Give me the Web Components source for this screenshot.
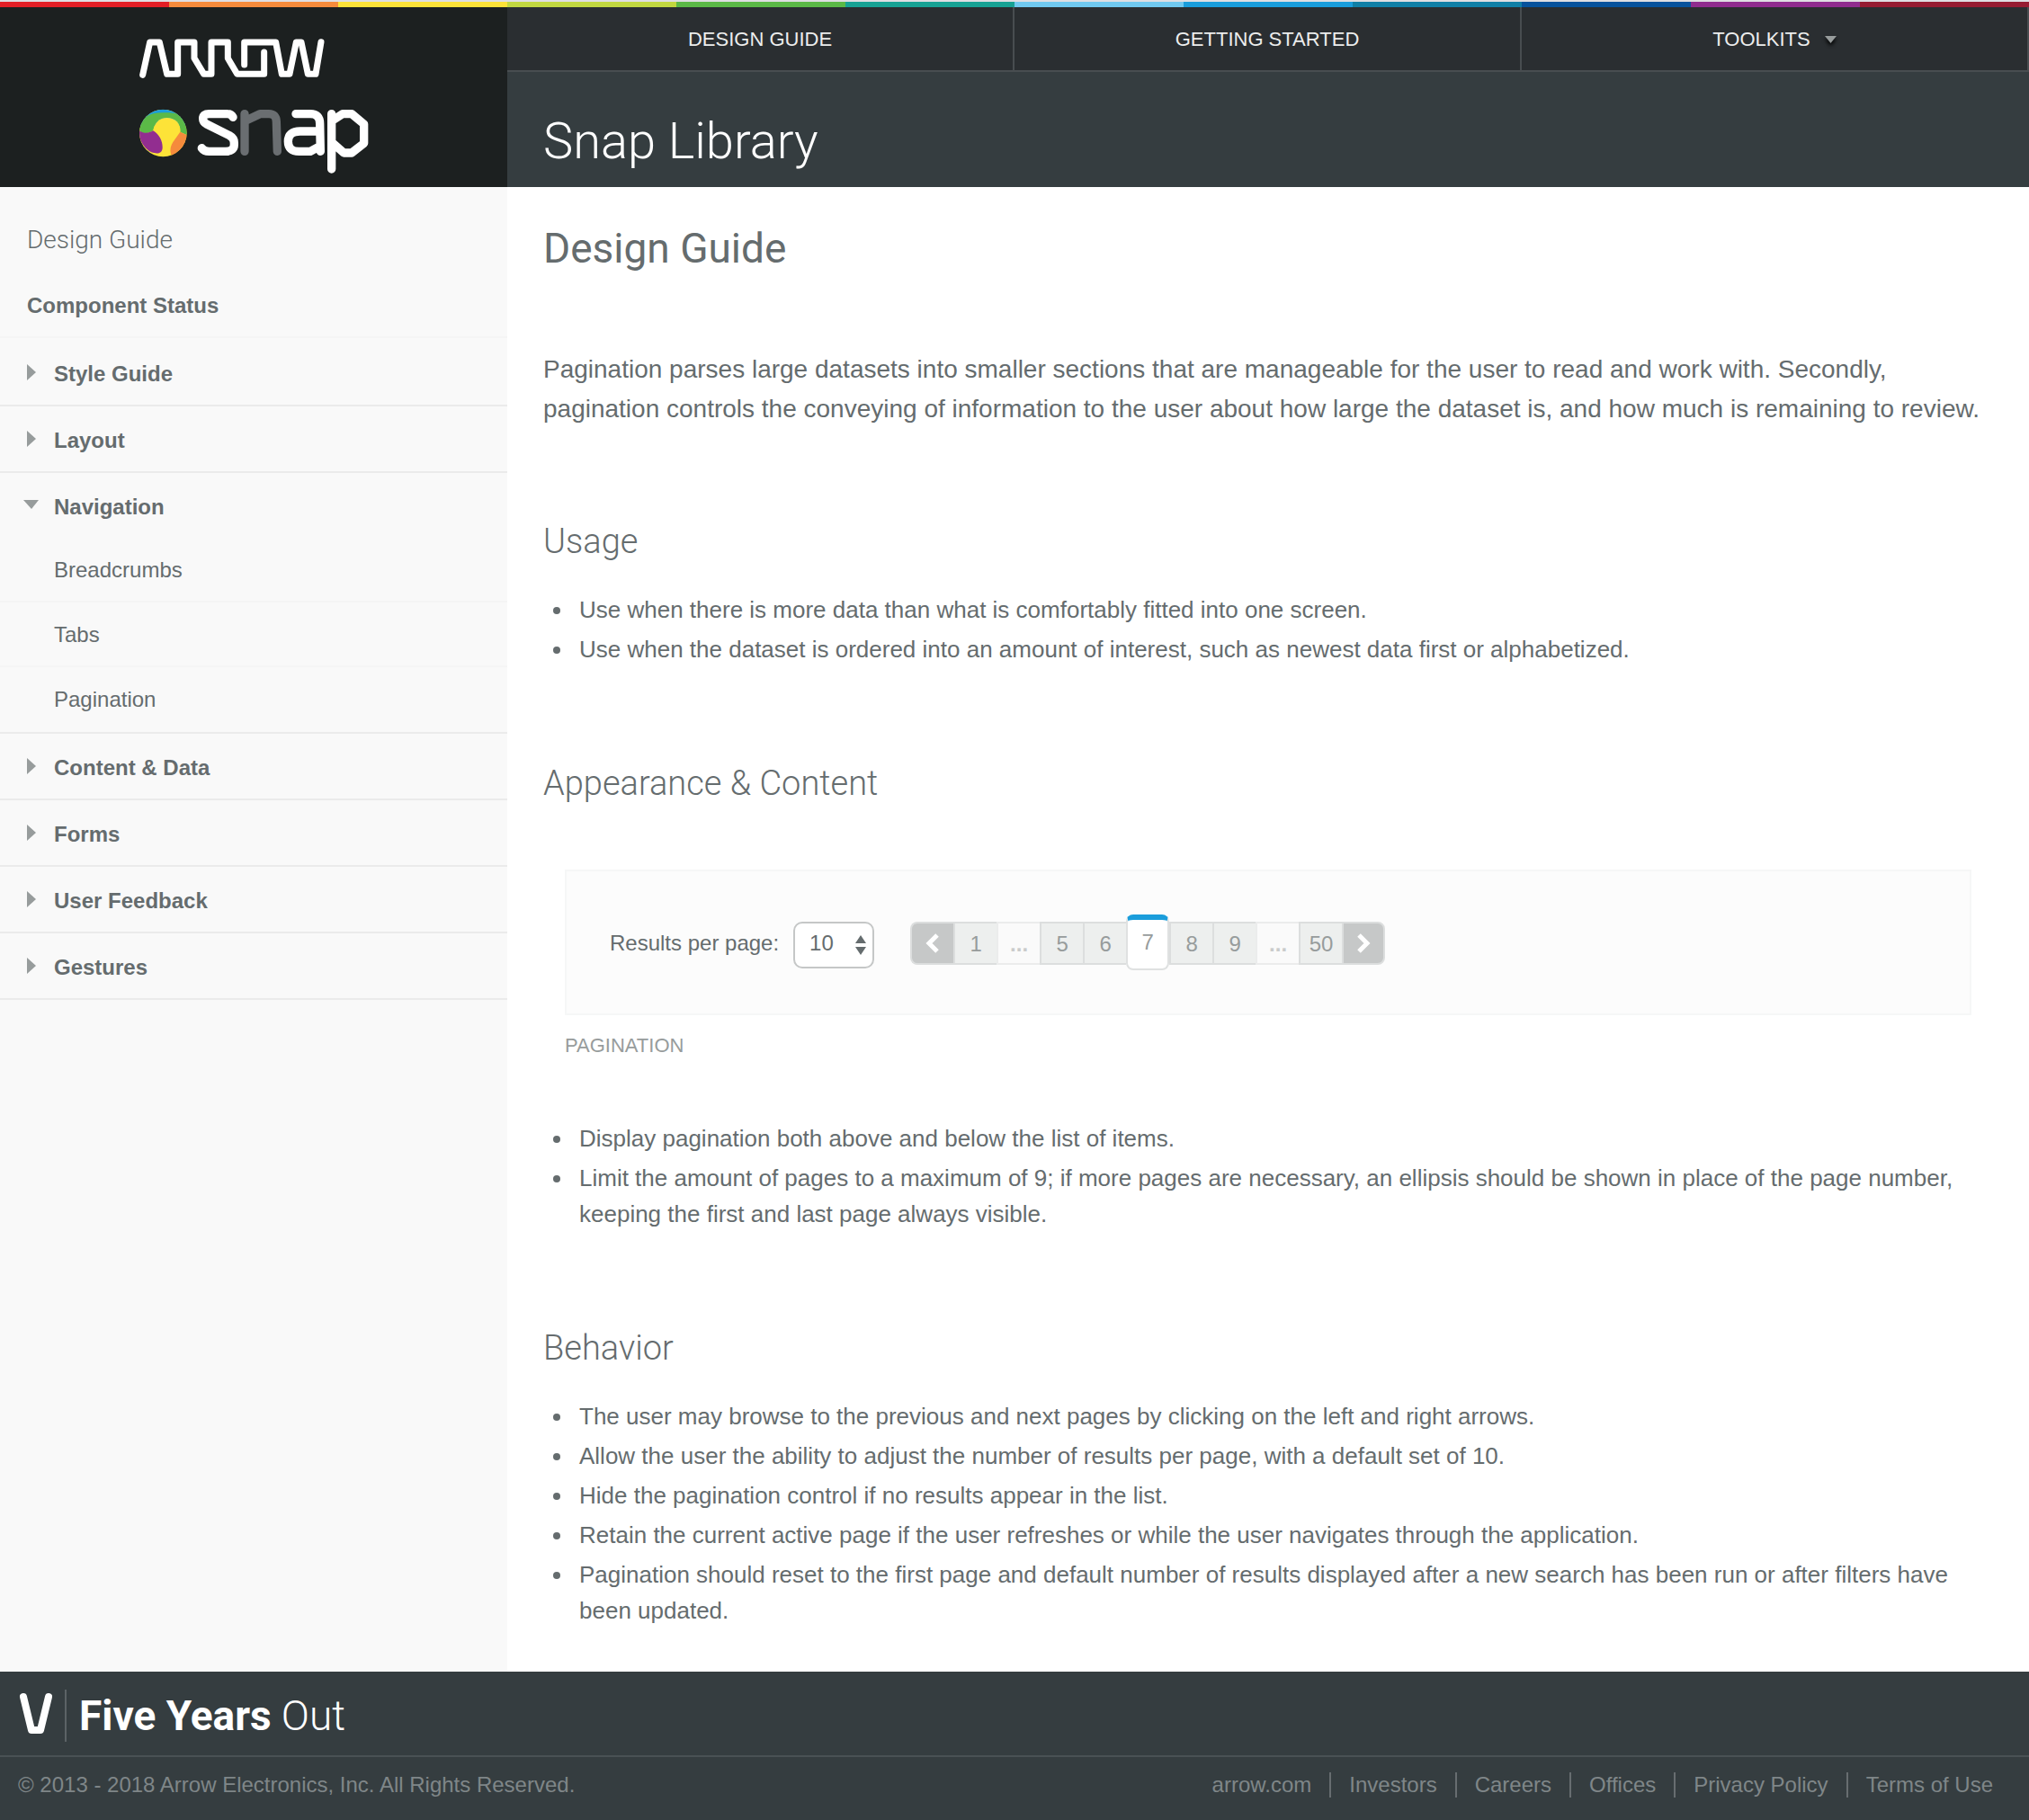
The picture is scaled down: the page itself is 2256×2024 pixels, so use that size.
<!DOCTYPE html>
<html lang="en">
<head>
<meta charset="utf-8">
<title>Snap Library - Pagination</title>
<style>
  html { --ink: #656c6e; --slate: #353d40; --line: #ebebeb; --line-soft: #f5f5f5; --muted: #979c9c; --heading: Roboto, "Liberation Sans", sans-serif; }
  body { margin: 0; background: #fff; color: var(--ink); font: 24px/24px "Liberation Sans", Arial, sans-serif; }
</style>
</head>
<body>
<snap-app>
  <rainbow-bar slot="bar"></rainbow-bar>
  <brand-logo slot="logo"></brand-logo>
  <top-nav slot="nav">
    <top-link href="#design">DESIGN GUIDE</top-link>
    <top-link href="#start">GETTING STARTED</top-link>
    <top-link href="#toolkits" menu>TOOLKITS</top-link>
  </top-nav>
  <page-title slot="title">Snap Library</page-title>
  <side-nav slot="side" heading="Design Guide">
    <nav-link href="#status" strong>Component Status</nav-link>
    <nav-group label="Style Guide" first></nav-group>
    <nav-group label="Layout"></nav-group>
    <nav-group label="Navigation" open>
      <nav-link href="#breadcrumbs">Breadcrumbs</nav-link>
      <nav-link href="#tabs">Tabs</nav-link>
      <nav-link href="#pagination" last>Pagination</nav-link>
    </nav-group>
    <nav-group label="Content &amp; Data"></nav-group>
    <nav-group label="Forms"></nav-group>
    <nav-group label="User Feedback"></nav-group>
    <nav-group label="Gestures"></nav-group>
  </side-nav>
  <guide-article slot="main"></guide-article>
  <site-footer slot="footer"></site-footer>
</snap-app>

<script>
const define = (name, markup) => customElements.define(name, class extends HTMLElement {
  constructor() {
    super();
    const get = key => this.getAttribute(key) || '';
    this.attachShadow({ mode: 'open' }).innerHTML =
      '<style>*{box-sizing:border-box}a{color:inherit;text-decoration:none}button,select{font:inherit;color:inherit}</style>' +
      (typeof markup === 'function' ? markup(get, this) : markup);
  }
});

const esc = s => s.replace(/&/g, '&amp;');

define('snap-app', `
<style>
  :host { display: flex; flex-direction: column; min-height: 100vh; }
  .head, .body { display: grid; grid-template-columns: 1fr 3fr; }
  .head { height: 200px; }
  .right { display: flex; flex-direction: column; min-width: 0; }
  .body { flex: 1; }
</style>
<slot name="bar"></slot>
<header class="head"><slot name="logo"></slot><div class="right"><slot name="nav"></slot><slot name="title"></slot></div></header>
<div class="body"><slot name="side"></slot><slot name="main"></slot></div>
<slot name="footer"></slot>`);

define('rainbow-bar', `
<style>
  :host { display: flex; height: 8px; border-top: 2px solid #dfdfe3; box-sizing: border-box; }
  i { flex: 1; }
</style>` + ['#e21f26', '#f58b3c', '#fde338', '#c1d840', '#5bb947', '#17a294', '#70c9f0', '#1a9ddb', '#107fa6', '#07529c', '#8f2c8e', '#961c32']
  .map(c => `<i style="background:${c}"></i>`).join(''));

define('brand-logo', `
<style>
  :host { display: flex; background: #1c2020; padding: 32px 0 0 155px; }
  svg { display: block; width: 260px; height: 156px; flex: none; }
</style>
<svg viewBox="30 30 780 468" fill="none" stroke-linecap="round" stroke-linejoin="round" role="img" aria-label="Arrow Snap">
  <g stroke="#fff" stroke-width="21">
    <path d="M41 160L65 51H97L122 157H158V51H213V104L245 157H270V51H325V104L356 157H446V84"/>
    <path d="M380 126V51H485L505 157H531L553 51H570L592 157H618L636 50"/>
  </g>
  <clipPath id="ball"><circle cx="109" cy="354" r="79"/></clipPath>
  <g clip-path="url(#ball)">
    <rect x="30" y="275" width="160" height="160" fill="#fde338"/>
    <path d="M30 275H190V330H30Z" fill="#1a9ddb"/>
    <path d="M28 340C40 300 64 286 106 286C150 284 170 290 192 310V362L166 350C168 322 150 303 122 303C96 303 80 320 76 346C60 356 46 358 34 350Z" fill="#5bb947"/>
    <path d="M76 346C80 320 96 303 122 303C150 303 168 322 166 350L150 390L104 390Z" fill="#fde338"/>
    <path d="M28 344C46 358 62 354 76 346C98 360 108 382 107 404C105 424 88 424 70 418C48 408 34 384 28 360Z" fill="#922d90"/>
    <path d="M30 374C40 398 52 410 66 420L56 424L28 390Z" fill="#62b5e5"/>
    <path d="M166 350L192 362V400L140 434C130 418 132 400 142 384Z" fill="#f58b3c"/>
  </g>
  <g stroke-width="28">
    <path stroke="#6a6e71" d="M381 290V415M381 314L432 290H462Q486 290 487 316L490 415"/>
    <g stroke="#fff">
      <path d="M342 301Q336 290 322 290H262Q242 290 242 306Q242 317 254 324L330 362Q346 371 346 386V392Q346 415 318 415H262Q246 415 238 404"/>
      <path d="M552 290H600Q632 290 632 322L634 415M632 348H566Q526 348 526 382Q526 415 562 415H600L632 398"/>
      <path d="M671 290V474M671 314L708 290H738L779 324V388L738 420H712L671 384"/>
    </g>
  </g>
</svg>`);

define('top-nav', `
<style>
  :host { display: block; }
  nav { display: flex; background: #2a2e31; border-bottom: 2px solid #484d50; }
</style>
<nav><slot></slot></nav>`);

define('top-link', (get, el) => `
<style>
  :host { flex: 1; display: block; border-right: 2px solid #484d50; color: #eceded; }
  a { display: flex; justify-content: center; align-items: center; gap: 16px; font-size: 22px; line-height: 28px; padding: 22px 0 20px; }
  svg { width: 13px; height: 8px; overflow: visible; filter: drop-shadow(0 3px 2px #000); }
</style>
<a href="${get('href')}"><slot></slot>${el.hasAttribute('menu') ? '<svg viewBox="0 0 13 8" fill="#979c9c" aria-hidden="true"><path d="M0 0H13L6.500 8Z"/></svg>' : ''}</a>`);

define('page-title', `
<style>
  :host { flex: 1; display: block; background: var(--slate); color: #fff; padding: 41px 40px 0; }
  h1 { margin: 0; font: 300 56px/72px var(--heading); }
</style>
<h1><slot></slot></h1>`);

define('side-nav', get => `
<style>
  :host { display: block; background: #f9f9f9; }
  h2 { margin: 0; padding: 43px 30px 19px; font: 300 28px/32px var(--heading); }
</style>
<nav aria-label="Guide"><h2>${get('heading')}</h2><slot></slot></nav>`);

define('nav-link', get => `
<style>
  :host { display: block; border-bottom: 2px solid var(--line-soft); }
  :host([last]) { border-color: transparent; }
  a { display: block; padding: 24px 30px 22px 60px; }
  :host([strong]) a { font-weight: bold; padding: 26px 30px 22px; }
</style>
<a href="${get('href')}"><slot></slot></a>`);

define('nav-group', (get, el) => {
  const open = el.hasAttribute('open');
  return `
<style>
  :host { display: block; border-bottom: 2px solid var(--line); }
  :host([first]) { padding-top: 2px; }
  button { display: flex; gap: 16px; width: 100%; margin: 0; border: 0; background: none; text-align: left; font-weight: bold; padding: 26px 26px 22px; line-height: 24px; }
  svg { width: 18px; height: 20px; flex: none; fill: var(--muted); }
</style>
<button type="button" aria-expanded="${open}"><svg viewBox="0 0 18 20" aria-hidden="true"><path d="${open ? 'M0 4H17L9 14Z' : 'M4 1L14 10L4 19Z'}"/></svg>${esc(get('label'))}</button>
<slot></slot>`;
});

const chevron = d => `<svg viewBox="0 0 16 24" width="16" height="24" fill="none" stroke="#fff" stroke-width="5" aria-hidden="true"><path d="${d}"/></svg>`;
define('page-picker', `
<style>
  :host { display: flex; align-items: flex-start; }
  label { line-height: 28px; padding-top: 10px; margin-right: 16px; }
  .pick { display: grid; margin-right: 40px; }
  .pick > * { grid-area: 1 / 1; }
  select { appearance: none; width: 90px; height: 52px; margin: 0; border: 2px solid #c5c7c7; border-radius: 10px; background: #fff; padding: 0 0 4px 16px; }
  .pick svg { justify-self: end; margin: 15px 9px 0 0; width: 12px; height: 22px; fill: var(--ink); pointer-events: none; }
  ol { display: flex; align-items: flex-start; list-style: none; margin: 0; padding: 0; color: var(--muted); }
  button { display: flex; align-items: center; justify-content: center; width: 48px; height: 48px; margin: 0; padding: 2px 0 0; background: #edefee; border: 2px solid #dcdede; border-right-width: 0; }
  .gap button { background: #fafafa; border-color: #ebecec; color: #c9cbcb; font-weight: bold; }
  .prev button, .next button { background: #c6c8c8; padding: 0; }
  .prev button { border-radius: 8px 0 0 8px; }
  .next button { border-radius: 0 8px 8px 0; border-right-width: 2px; }
  .now { margin: -8px 0 -6px; }
  .now button { height: 62px; background: #fff; border: 2px solid #dfe1e1; border-top: 6px solid #1a9ddb; border-radius: 8px; padding-bottom: 6px; }
</style>
<label for="size">Results per page:</label>
<div class="pick">
  <select id="size"><option>10</option><option>25</option><option>50</option></select>
  <svg viewBox="0 0 12 22" aria-hidden="true"><path d="M0 9L6 0L12 9ZM0 13H12L6 22Z"/></svg>
</div>
<ol>
  <li class="prev"><button type="button" aria-label="Previous page">${chevron('M13 3L4 12L13 21')}</button></li>
  ${['1', '...', '5', '6', '7', '8', '9', '...', '50'].map(p =>
    `<li class="${p === '...' ? 'gap' : p === '7' ? 'now' : ''}"><button type="button"${p === '7' ? ' aria-current="page"' : ''}>${p}</button></li>`).join('')}
  <li class="next"><button type="button" aria-label="Next page">${chevron('M3 3L12 12L3 21')}</button></li>
</ol>`);

define('guide-article', `
<style>
  :host { display: block; padding: 40px 40px 42px; min-width: 0; }
  h1 { margin: 0 0 85px; font: 400 46px/56px var(--heading); }
  h2 { margin: 101px 0 32px; font: 300 38px/48px var(--heading); }
  .intro { margin: 0; font-size: 28px; line-height: 44px; }
  ul { margin: 0; padding-left: 34px; font-size: 26px; line-height: 40px; display: flow-root; }
  li { margin-bottom: 4px; padding-left: 6px; }
  figure { margin: 72px 24px 67px; }
  .demo { border: 2px solid #f6f7f7; background: #fcfcfc; padding: 56px 48px 50px; }
  figcaption { margin-top: 18px; font-size: 22px; line-height: 32px; color: var(--muted); }
</style>
<main>
  <h1>Design Guide</h1>
  <p class="intro">Pagination parses large datasets into smaller sections that are manageable for the user to read and work with. Secondly, pagination controls the conveying of information to the user about how large the dataset is, and how much is remaining to review.</p>
  <h2>Usage</h2>
  <ul>
    <li>Use when there is more data than what is comfortably fitted into one screen.</li>
    <li>Use when the dataset is ordered into an amount of interest, such as newest data first or alphabetized.</li>
  </ul>
  <h2>Appearance &amp; Content</h2>
  <figure>
    <div class="demo"><page-picker></page-picker></div>
    <figcaption>PAGINATION</figcaption>
  </figure>
  <ul>
    <li>Display pagination both above and below the list of items.</li>
    <li>Limit the amount of pages to a maximum of 9; if more pages are necessary, an ellipsis should be shown in place of the page number, keeping the first and last page always visible.</li>
  </ul>
  <h2>Behavior</h2>
  <ul>
    <li>The user may browse to the previous and next pages by clicking on the left and right arrows.</li>
    <li>Allow the user the ability to adjust the number of results per page, with a default set of 10.</li>
    <li>Hide the pagination control if no results appear in the list.</li>
    <li>Retain the current active page if the user refreshes or while the user navigates through the application.</li>
    <li>Pagination should reset to the first page and default number of results displayed after a new search has been run or after filters have been updated.</li>
  </ul>
</main>`);

define('site-footer', `
<style>
  :host { display: block; background: var(--slate); color: #7f8688; }
  .brand { display: flex; align-items: flex-start; padding: 20px 20px 15px; border-bottom: 2px solid #495154; color: #fff; }
  svg { width: 40px; height: 48px; margin-top: 3px; }
  .brand span { border-left: 2px solid #5c6366; margin-left: 12px; padding-left: 14px; font: 300 46px/58px var(--heading); }
  b { font-weight: 700; }
  .legal { display: flex; justify-content: space-between; align-items: center; padding: 17px 40px 25px 20px; line-height: 28px; }
  p { margin: 0; }
  nav { display: flex; }
  nav a + a { border-left: 2px solid #676d70; margin-left: 20px; padding-left: 20px; }
</style>
<footer>
  <div class="brand">
    <svg viewBox="0 0 40 48" fill="none" stroke="#fff" stroke-width="8" stroke-linecap="round" stroke-linejoin="round" aria-hidden="true"><path d="M6 5L15 42H25L34 5"/></svg>
    <span><b>Five Years</b> Out</span>
  </div>
  <div class="legal">
    <p>© 2013 - 2018 Arrow Electronics, Inc. All Rights Reserved.</p>
    <nav aria-label="Legal"><a href="#arrow">arrow.com</a><a href="#investors">Investors</a><a href="#careers">Careers</a><a href="#offices">Offices</a><a href="#privacy">Privacy Policy</a><a href="#terms">Terms of Use</a></nav>
  </div>
</footer>`);
</script>
</body>
</html>
